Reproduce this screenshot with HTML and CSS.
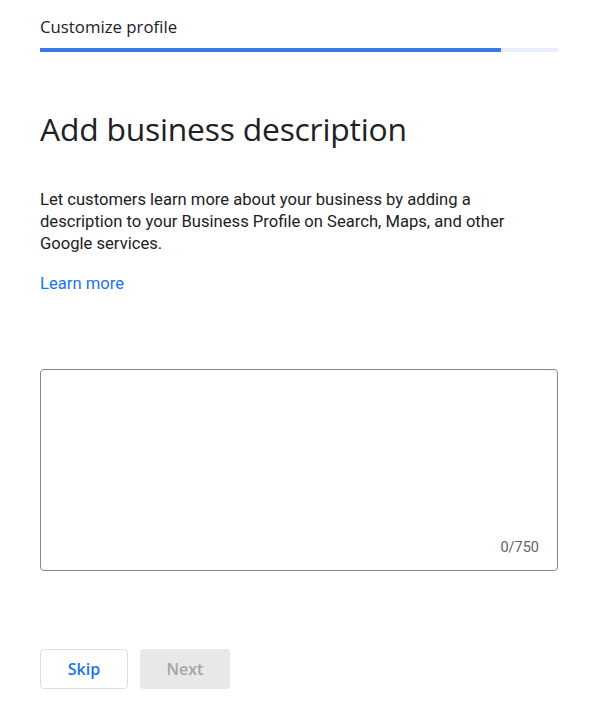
FILE: index.html
```html
<!DOCTYPE html>
<html lang="en">
<head>
<meta charset="utf-8">
<title>Customize profile</title>
<link rel="stylesheet" href="styles.css">
</head>
<body>
<main class="page">
  <header class="step-header">
    <div class="step-title">Customize profile</div>
    <div class="progress"><div class="progress-fill" style="width: 89%"></div></div>
  </header>
  <h1 class="title">Add business description</h1>
  <p class="intro">Let customers learn more about your business by adding a description to your Business Profile on Search, Maps, and other Google services.</p>
  <a class="learn" href="#">Learn more</a>
  <div class="field">
    <textarea class="field-input" aria-label="Business description"></textarea>
    <span class="counter">0/750</span>
  </div>
  <div class="actions">
    <button class="btn btn-outline" type="button">Skip</button>
    <button class="btn btn-disabled" type="button" disabled>Next</button>
  </div>
</main>
</body>
</html>
```
FILE: styles.css
```css
html, body {
  margin: 0;
  padding: 0;
  background: #ffffff;
}
body {
  font-family: Roboto, "Liberation Sans", sans-serif;
  color: #202124;
}
.page {
  width: 518px;
  padding: 15px 0 0 40px;
}
.step-title {
  font-family: "Open Sans", Roboto, sans-serif;
  font-size: 16.8px;
  font-weight: 500;
  line-height: 24px;
  color: #202124;
}
.progress {
  margin-top: 9px;
  height: 4px;
  background: #e9f0fb;
}
.progress-fill {
  height: 100%;
  background: #3b78e7;
}
.title {
  margin: 57px 0 0;
  font-family: "Open Sans", Roboto, sans-serif;
  font-weight: 400;
  font-size: 31.8px;
  line-height: 40px;
  color: #202124;
  letter-spacing: -0.2px;
}
.intro {
  margin: 40px 0 0;
  max-width: 480px;
  font-size: 16.6px;
  line-height: 22px;
  color: #202124;
}
.learn {
  display: block;
  margin-top: 18px;
  font-size: 16.6px;
  line-height: 22px;
  color: #1a73e8;
  text-decoration: none;
}
.field {
  position: relative;
  margin-top: 74px;
  height: 202px;
  box-sizing: border-box;
  border: 1px solid #80868b;
  border-radius: 4px;
}
.field-input {
  display: block;
  width: 100%;
  height: 100%;
  box-sizing: border-box;
  border: 0;
  background: transparent;
  resize: none;
  outline: none;
  padding: 16px;
  font: inherit;
}
.counter {
  position: absolute;
  right: 18px;
  bottom: 14px;
  font-size: 14.5px;
  line-height: 16px;
  color: #5f6368;
}
.actions {
  display: flex;
  gap: 12px;
  margin-top: 78px;
}
.btn {
  height: 40px;
  border-radius: 4px;
  font-family: "Open Sans", Roboto, sans-serif;
  font-size: 16px;
  font-weight: 600;
  padding: 0;
  box-sizing: border-box;
}
.btn-outline {
  width: 88px;
  background: #ffffff;
  border: 1px solid #dadce0;
  color: #1a73e8;
}
.btn-disabled {
  width: 90px;
  background: #e8e8e8;
  border: 0;
  color: #a5a5a5;
}
```
